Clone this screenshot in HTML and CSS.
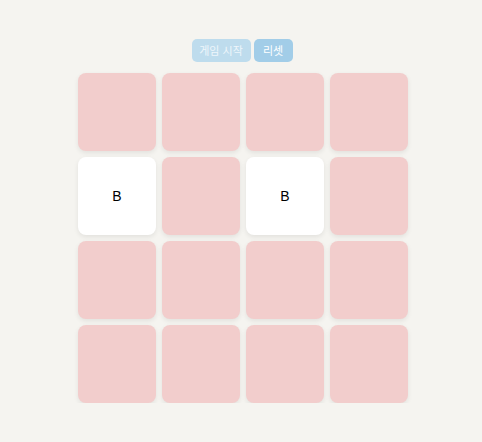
FILE: index.html
```html
<!DOCTYPE html>
<html lang="ko">
<head>
<meta charset="utf-8">
<link rel="stylesheet" href="styles.css">
</head>
<body>
<div class="app">
  <div class="controls">
    <button class="btn btn-start">게임 시작</button>
    <button class="btn btn-reset">리셋</button>
  </div>
  <div class="board">
    <div class="card"></div>
    <div class="card"></div>
    <div class="card"></div>
    <div class="card"></div>
    <div class="card open">B</div>
    <div class="card"></div>
    <div class="card open">B</div>
    <div class="card"></div>
    <div class="card"></div>
    <div class="card"></div>
    <div class="card"></div>
    <div class="card"></div>
    <div class="card"></div>
    <div class="card"></div>
    <div class="card"></div>
    <div class="card"></div>
  </div>
</div>
</body>
</html>
```
FILE: styles.css
```css
html, body {
  margin: 0;
  padding: 0;
  background: #f5f4f0;
  font-family: "Liberation Sans", "Noto Sans CJK KR", sans-serif;
}
.app {
  display: flex;
  flex-direction: column;
  align-items: center;
  padding: 39px 0 0 4px;
}
.controls {
  display: flex;
  gap: 3px;
  margin: 0 2px 11px 0;
}
.btn {
  box-sizing: border-box;
  height: 23px;
  padding: 0;
  border: none;
  border-radius: 5px;
  color: #fff;
  font-family: "Noto Sans CJK KR", sans-serif;
  font-size: 11px;
  line-height: 23px;
  white-space: nowrap;
  text-align: center;
}
.btn-start {
  background: #bedced;
  color: #eef6fb;
  width: 59px;
}
.btn-reset {
  background: #a2cde8;
  width: 39px;
}
.board {
  display: grid;
  grid-template-columns: repeat(4, 78px);
  grid-auto-rows: 78px;
  gap: 6px;
}
.card {
  background: #f2cdcc;
  border-radius: 8px;
  box-shadow: 0 2px 5px rgba(0, 0, 0, 0.08);
  display: flex;
  align-items: center;
  justify-content: center;
  font-size: 14px;
  color: #000;
}
.card.open {
  background: #fff;
}
```
